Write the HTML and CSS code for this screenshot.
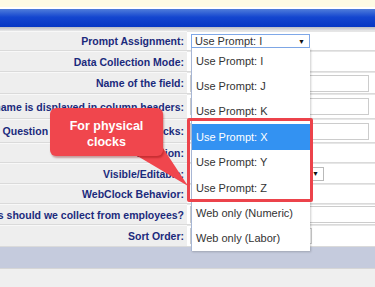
FILE: index.html
```html
<!DOCTYPE html>
<html lang="en">
	<head>
		<meta charset="UTF-8" />
		<meta name="viewport" content="width=device-width, initial-scale=1.0" />
		<title>Field Settings</title>
		<link rel="stylesheet" href="styles.css">
	</head>
	<body>
		<div class="notice"></div>
		<div class="titlebar"></div>
		<div class="titlebar-shadow"></div>

		<section class="form">
			<div class="row">
				<div class="label">Prompt Assignment:</div>
				<div class="value">
					<div class="select select-prompt is-open">
						<span>Use Prompt: I</span>
						<span class="caret">&#9660;</span>
					</div>
				</div>
			</div>
			<div class="row">
				<div class="label">Data Collection Mode:</div>
				<div class="value"></div>
			</div>
			<div class="row">
				<div class="label">Name of the field:</div>
				<div class="value"><div class="text-input"></div></div>
			</div>
			<div class="row">
				<div class="label">How this name is displayed in column headers:</div>
				<div class="value"><div class="text-input"></div></div>
			</div>
			<div class="row">
				<div class="label">Question shown on physical clocks:</div>
				<div class="value"><div class="text-input"></div></div>
			</div>
			<div class="row">
				<div class="label">Location:</div>
				<div class="value"></div>
			</div>
			<div class="row">
				<div class="label">Visible/Editable:</div>
				<div class="value">
					<div class="select select-visible">
						<span>Visible</span>
						<span class="caret">&#9660;</span>
					</div>
				</div>
			</div>
			<div class="row">
				<div class="label">WebClock Behavior:</div>
				<div class="value"></div>
			</div>
			<div class="row">
				<div class="label">Which punches should we collect from employees?</div>
				<div class="value"><div class="text-input text-input-wide"></div></div>
			</div>
			<div class="row">
				<div class="label">Sort Order:</div>
				<div class="value"><div class="text-input text-input-short"></div></div>
			</div>
		</section>
		<div class="footer-band"></div>

		<!-- open list of the Prompt Assignment select -->
		<ul class="dropdown">
			<li>Use Prompt: I</li>
			<li>Use Prompt: J</li>
			<li>Use Prompt: K</li>
			<li class="selected">Use Prompt: X</li>
			<li>Use Prompt: Y</li>
			<li>Use Prompt: Z</li>
			<li>Web only (Numeric)</li>
			<li>Web only (Labor)</li>
		</ul>

		<!-- annotation -->
		<div class="highlight-box"></div>
		<svg class="callout-tail" width="375" height="287" viewBox="0 0 375 287" aria-hidden="true">
			<polygon points="134,154 161,145 188,186" fill="#f0464d" />
		</svg>
		<div class="callout">For physical<br />clocks</div>
	</body>
</html>
```

FILE: styles.css
```css
body {
	margin: 0;
	position: relative;
	width: 375px;
	height: 287px;
	overflow: hidden;
	background: #efefef;
	font-family: "Liberation Sans", Arial, sans-serif;
}
.notice {
	height: 7px;
	background: #fdfbe4;
	border-bottom: 2px solid #ffffff;
}
.titlebar {
	height: 18px;
	background: linear-gradient(#4f7ddb, #1446cf 45%, #0637c4);
}
.titlebar-shadow {
	height: 4px;
	background: linear-gradient(#b9bcc4, #e9e9e9);
}

/* form rows */
.form {
	display: flex;
	flex-direction: column;
}
.row {
	display: grid;
	grid-template-columns: 187px 1fr;
	box-sizing: border-box;
	height: 21px;
	border-bottom: 1px solid #dadada;
}
.row:nth-child(1) { height: 20px; }
.row:nth-child(3) { height: 22px; }
.row:nth-child(4) { height: 25px; }
.row:nth-child(5) { height: 24px; }
.row:nth-child(6) { height: 20px; }
.row:nth-child(8) { height: 20px; }
.row:nth-child(10) { height: 22px; }

.label {
	display: flex;
	justify-content: flex-end;
	align-items: center;
	overflow: hidden;
	white-space: nowrap;
	padding-right: 3px;
	background: #eeeeee;
	border-top: 1px solid #f8f8f8;
	color: #1b2a7c;
	font-size: 10.5px;
	font-weight: bold;
}
.value {
	display: flex;
	align-items: center;
	background: #ffffff;
	border-top: 1px solid #e6e6e6;
}

.select {
	position: relative;
	display: flex;
	align-items: center;
	justify-content: space-between;
	box-sizing: border-box;
	height: 14px;
	margin-left: 4px;
	padding: 0 4px 0 3px;
	background: #fff;
	border: 1px solid #b9b9b9;
	color: #333;
	font-size: 11px;
}
.select-prompt {
	width: 119px;
}
.select.is-open {
	border-color: #7fa8e8;
}
.select-visible {
	width: 133px;
}
.caret {
	font-size: 7px;
	color: #111;
}
.text-input {
	box-sizing: border-box;
	width: 179px;
	height: 17px;
	margin-left: 3px;
	background: #fff;
	border: 1px solid #cccccc;
}
.text-input-wide {
	width: 190px;
}
.text-input-short {
	width: 122px;
	height: 16px;
}

.footer-band {
	height: 21px;
	background: #c5cbdd;
	border-bottom: 1px solid #d6d6d6;
}

/* open dropdown list */
.dropdown {
	position: absolute;
	left: 191px;
	top: 48px;
	width: 118px;
	margin: 0;
	padding: 0;
	list-style: none;
	background: #fff;
	border-left: 1px solid #a7b6d4;
	box-shadow: 1px 1px 2px rgba(0, 0, 0, 0.2);
	color: #333;
	font-size: 11px;
}
.dropdown li {
	display: flex;
	align-items: center;
	height: 25.4px;
	padding-left: 4px;
}
.dropdown li.selected {
	background: #3392f2;
	color: #fff;
}

/* annotation */
.highlight-box {
	position: absolute;
	left: 187px;
	top: 118px;
	width: 126px;
	height: 84px;
	box-sizing: border-box;
	border: 3px solid #ec434b;
	border-radius: 2px;
}
.callout-tail {
	position: absolute;
	left: 0;
	top: 0;
}
.callout {
	position: absolute;
	left: 50px;
	top: 108px;
	width: 113px;
	height: 48px;
	box-sizing: border-box;
	padding-top: 10px;
	background: #f0464d;
	border-radius: 6px;
	box-shadow: 1px 2px 2px rgba(120, 0, 0, 0.35);
	color: #fff;
	font-size: 12.5px;
	font-weight: bold;
	line-height: 16px;
	text-align: center;
}
```
